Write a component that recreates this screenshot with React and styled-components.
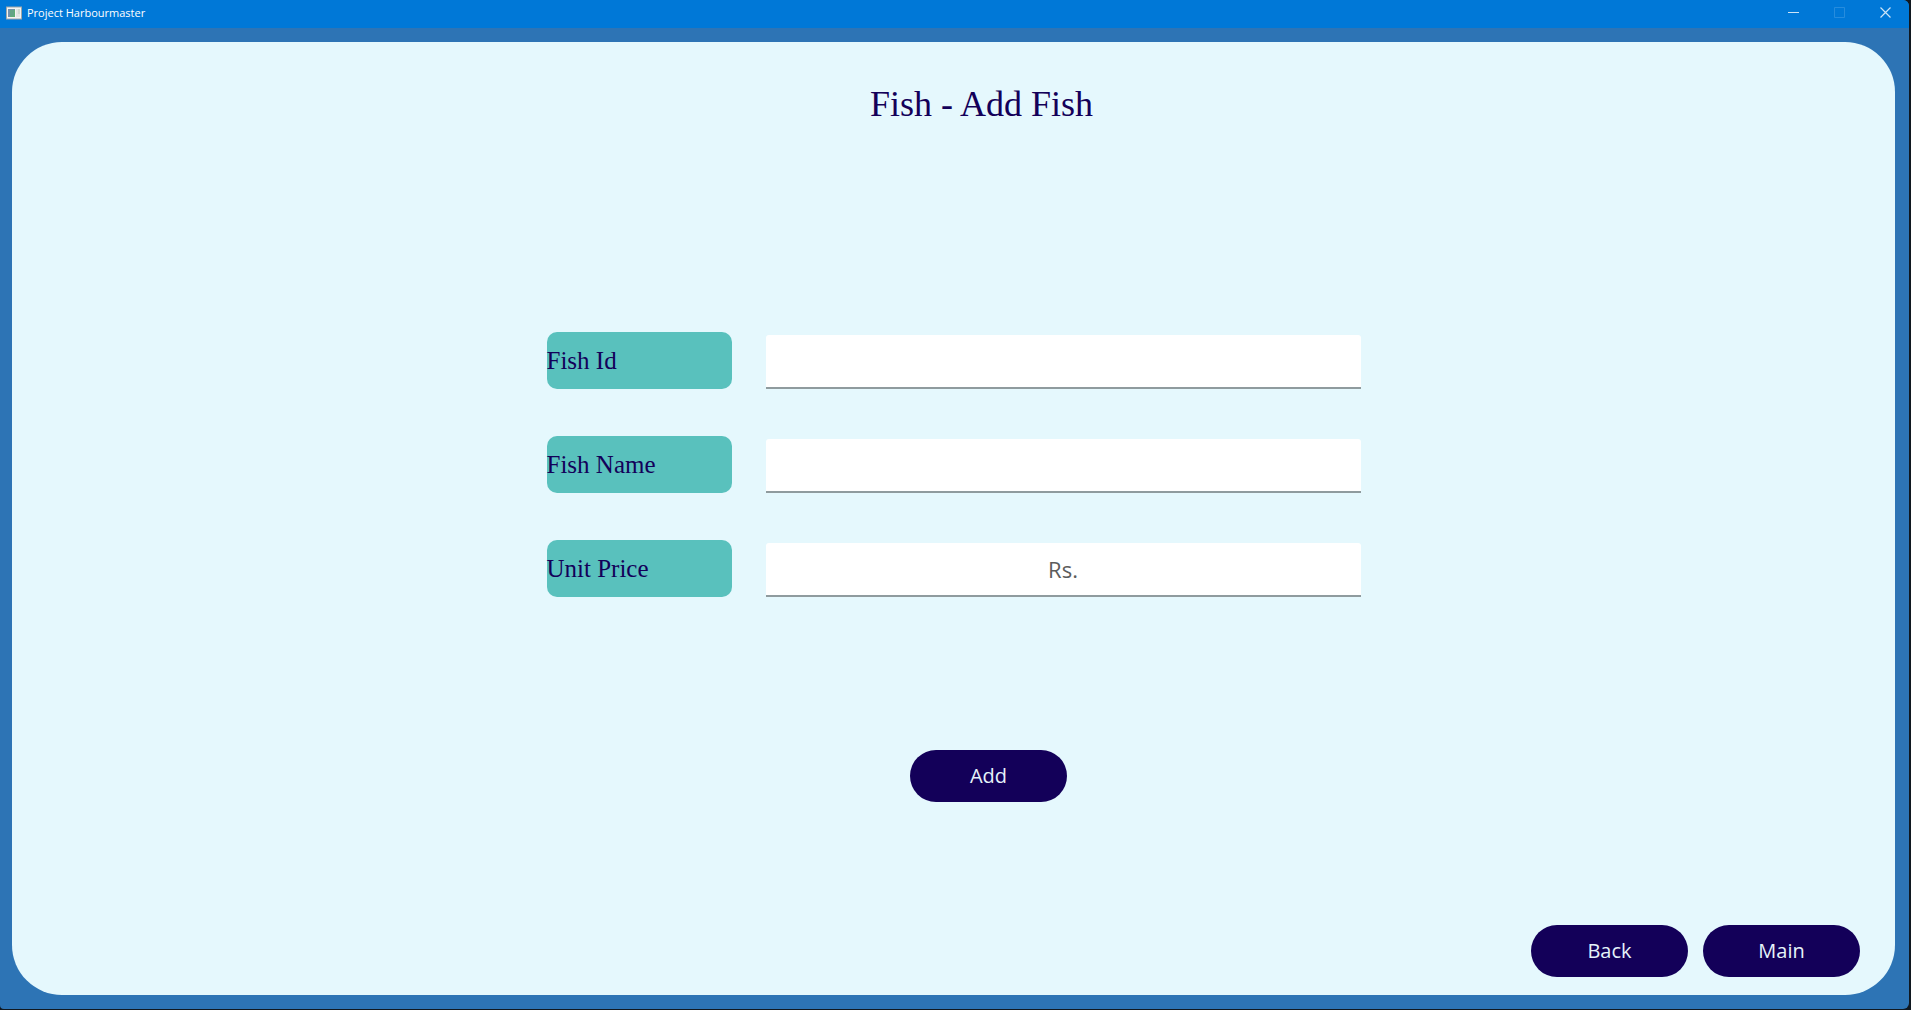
import React from "react";
import styled, { createGlobalStyle } from "styled-components";

const color = {
  titleBar: "#0078d7",
  frame: "#2d74b5",
  panel: "#e5f8fd",
  navy: "#130059",
  teal: "#59c1bd",
  desktop: "#101820",
};

const sans = `"Open Sans", "Noto Sans", sans-serif`;
const serif = `"Liberation Serif", serif`;

const GlobalStyle = createGlobalStyle`
  *, *::before, *::after { box-sizing: border-box; }
  body { margin: 0; background: ${color.desktop}; font-family: ${sans}; }
  button, input { font-family: inherit; }
`;

const Desktop = styled.div`
  display: flex;
  min-height: 100vh;
  padding: 0 2px 1px 0;
`;

const Window = styled.div`
  flex: 1;
  display: flex;
  flex-direction: column;
  overflow: hidden;
  border-radius: 0 6px 6px 4px;
  background: ${color.frame};
`;

const TitleBar = styled.header`
  display: flex;
  align-items: center;
  height: 28px;
  padding: 0 1px 3px 6px;
  background: ${color.titleBar};
  color: #fff;
`;

const AppName = styled.span`
  flex: 1;
  margin-left: 5px;
  font-size: 11px;
  line-height: 16px;
`;

const WindowButton = styled.button`
  display: flex;
  align-items: center;
  justify-content: center;
  width: 46px;
  height: 25px;
  padding: 0;
  border: 0;
  background: transparent;
  color: #fff;
  opacity: ${(p) => (p.disabled ? 0.15 : 0.8)};
`;

const Panel = styled.main`
  flex: 1;
  display: flex;
  flex-direction: column;
  margin: 14px 14px 14px 12px;
  padding: 40px 35px 18px;
  border-radius: 50px;
  background: ${color.panel};
`;

const Heading = styled.h1`
  margin: 0;
  padding-left: 56px;
  color: ${color.navy};
  font-family: ${serif};
  font-size: 36px;
  font-weight: 400;
  line-height: 44px;
  text-align: center;
`;

const Form = styled.form`
  display: flex;
  flex-direction: column;
  align-items: center;
  margin-top: 206px;
`;

const Fields = styled.div`
  display: grid;
  gap: 47px;
  width: 100%;
  max-width: 814px;
`;

const Field = styled.div`
  display: grid;
  grid-template-columns: 185px 1fr;
  column-gap: 34px;
  align-items: end;
`;

const Label = styled.label`
  height: 57px;
  border-radius: 10px;
  background: ${color.teal};
  color: ${color.navy};
  font-family: ${serif};
  font-size: 25px;
  line-height: 57px;
`;

const TextInput = styled.input`
  width: 100%;
  height: 54px;
  padding: 0 12px;
  border: 0;
  border-bottom: 2px solid #8f9b9e;
  border-radius: 3px 3px 0 0;
  background: #fff;
  color: #333;
  font-size: 22px;
  text-align: center;
  outline: none;

  &::placeholder { color: #5c5c5c; opacity: 1; }
`;

const PillButton = styled.button`
  width: 157px;
  height: 52px;
  padding: 0;
  border: 0;
  border-radius: 26px;
  background: ${color.navy};
  color: #e5f3fa;
  font-size: 20px;
  line-height: 28px;
`;

const Submit = styled.div`
  padding: 153px 0 0 70px;
`;

const Footer = styled.footer`
  display: flex;
  justify-content: flex-end;
  gap: 15px;
  margin-top: auto;
`;

const fields = [
  { id: "fish-id", label: "Fish Id" },
  { id: "fish-name", label: "Fish Name" },
  { id: "unit-price", label: "Unit Price", placeholder: "Rs." },
];

function AppIcon() {
  return (
    <svg width="16" height="14" viewBox="0 0 16 14" aria-hidden="true">
      <rect x="0.5" y="1" width="15" height="12" fill="#f4f4f2" stroke="#9fa6a8" />
      <rect x="2" y="3" width="7" height="8" fill="#7292ad" />
      <path d="M4 11l5-8v8z" fill="#5fae74" />
      <rect x="4" y="4" width="4" height="6" fill="#63a486" />
      <rect x="10" y="3" width="4" height="8" fill="#e3e5e3" />
      <path d="M13 3v5" stroke="#b9d1bd" />
    </svg>
  );
}

export default function App() {
  return (
    <>
      <GlobalStyle />
      <Desktop>
        <Window>
          <TitleBar>
            <AppIcon />
            <AppName>Project Harbourmaster</AppName>
            <WindowButton type="button" aria-label="Minimize">
              <svg width="11" height="11" viewBox="0 0 11 11"><path d="M0 5.5h11" stroke="currentColor" /></svg>
            </WindowButton>
            <WindowButton type="button" aria-label="Maximize" disabled>
              <svg width="11" height="11" viewBox="0 0 11 11"><path d="M.5.5h10v10H.5z" fill="none" stroke="currentColor" /></svg>
            </WindowButton>
            <WindowButton type="button" aria-label="Close">
              <svg width="11" height="11" viewBox="0 0 11 11"><path d="M.5.5l10 10M10.5.5l-10 10" stroke="currentColor" strokeWidth="1.2" /></svg>
            </WindowButton>
          </TitleBar>
          <Panel>
            <Heading>Fish - Add Fish</Heading>
            <Form onSubmit={(e) => e.preventDefault()}>
              <Fields>
                {fields.map((f) => (
                  <Field key={f.id}>
                    <Label htmlFor={f.id}>{f.label}</Label>
                    <TextInput id={f.id} type="text" placeholder={f.placeholder} />
                  </Field>
                ))}
              </Fields>
              <Submit>
                <PillButton type="submit">Add</PillButton>
              </Submit>
            </Form>
            <Footer>
              <PillButton type="button">Back</PillButton>
              <PillButton type="button">Main</PillButton>
            </Footer>
          </Panel>
        </Window>
      </Desktop>
    </>
  );
}
